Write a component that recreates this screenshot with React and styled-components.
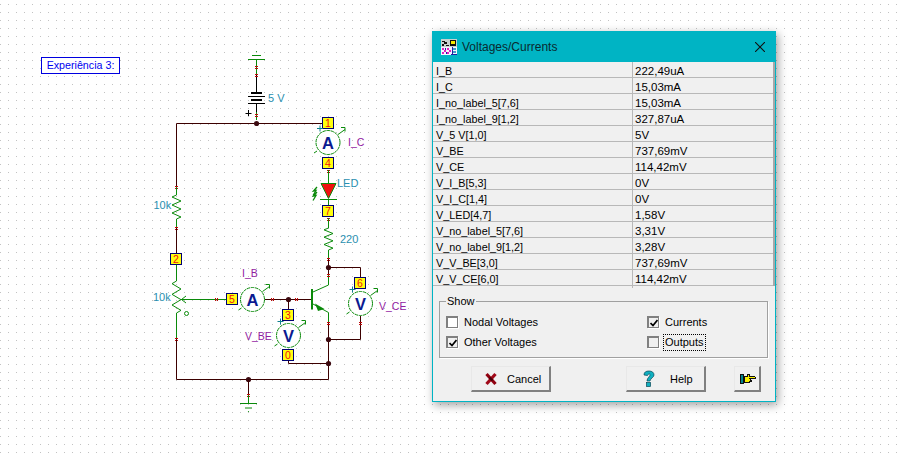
import React from 'react';
import styled, { createGlobalStyle } from 'styled-components';

const Global = createGlobalStyle`
  html, body { margin: 0; padding: 0; background: #fff; }
`;

const Desktop = styled.div`
  position: relative;
  width: 898px;
  height: 454px;
  overflow: hidden;
  display: flex;
  align-items: flex-start;
  background-color: #fff;
  background-image: conic-gradient(from 270deg at 1px 1px, #c2c2c2 90deg, transparent 0);
  background-size: 8px 8px;
  background-position: 0 4px;
`;

const NoteLabel = styled.div`
  position: absolute;
  left: 41px;
  top: 57px;
  width: 77px;
  height: 15px;
  border: 1px solid #0000e0;
  background: #fff;
  color: #0000f0;
  font: 10.7px/15px "Liberation Sans", Arial, sans-serif;
  text-align: center;
`;

const Schematic = styled.svg`
  display: block;
  flex: none;
  width: 432px;
  height: 454px;
  font-family: "Liberation Sans", Arial, sans-serif;
`;

const Dialog = styled.section`
  flex: none;
  width: 344px;
  height: 371px;
  margin-top: 31px;
  box-sizing: border-box;
  border: 1px solid #00b4c4;
  border-width: 0 1px 1px 1px;
  background: #f0f0f0;
  box-shadow: 2px 3px 9px rgba(0, 0, 0, 0.38);
  display: flex;
  flex-direction: column;
  font: 11px "Liberation Sans", Arial, sans-serif;
  color: #000;
`;

const TitleBar = styled.header`
  height: 31px;
  flex: none;
  background: #00b4c4;
  display: flex;
  align-items: center;
  gap: 5px;
  padding: 0 10px 0 8px;
`;

const DialogTitle = styled.h1`
  flex: 1;
  margin: 0;
  font: 400 12px "Liberation Sans", Arial, sans-serif;
  color: #0a2a30;
`;

const Results = styled.div`
  flex: none;
  border-right: 2px solid #a8a8a8;
  display: flex;
  flex-direction: column;
`;

const Row = styled.div`
  height: 16px;
  box-sizing: border-box;
  display: grid;
  grid-template-columns: 199px 1fr;
  border-bottom: 1px solid #b8b8b8;
  line-height: 18px;
`;

const NameCell = styled.div`
  padding-left: 3px;
  white-space: nowrap;
  font-size: 10.8px;
`;

const ValueCell = styled.div`
  padding-left: 2px;
  border-left: 1px solid #b8b8b8;
  white-space: nowrap;
  font-size: 11.5px;
`;

const ShowGroup = styled.fieldset`
  flex: none;
  margin: 10px 7px 0 6px;
  padding: 8px 0 0 6px;
  height: 62px;
  box-sizing: border-box;
  border: 1px solid #a0a0a0;
  box-shadow: 1px 1px 0 #fff;
  display: grid;
  grid-template-columns: 201px 1fr;
  grid-auto-rows: 20px;
  align-content: start;
`;

const GroupLegend = styled.legend`
  padding: 0 1px;
  margin-left: 0;
  line-height: 11px;
  height: 11px;
`;

const Option = styled.label`
  display: flex;
  align-items: center;
  gap: 6px;
  height: 14px;
`;

const OptionText = styled.span`
  outline: ${p => (p.$focused ? '1px dotted #000' : 'none')};
  outline-offset: 1px;
  line-height: 13px;
`;

const CheckBox = styled.span`
  width: 12px;
  height: 12px;
  box-sizing: border-box;
  flex: none;
  background: ${p => (p.$shaded ? '#f0f0f0' : '#fff')};
  border: 1px solid #808080;
  border-width: 2px 1px 1px 2px;
  box-shadow: 1px 1px 0 #fff;
  display: flex;
  align-items: center;
  justify-content: center;
`;

const Actions = styled.div`
  flex: none;
  margin-top: 8px;
  padding-left: 38px;
  display: flex;
`;

const ActionButton = styled.button`
  width: ${p => p.$width}px;
  height: 26px;
  margin-left: ${p => p.$gap || 0}px;
  box-sizing: border-box;
  padding: 0 0 0 ${p => p.$inset}px;
  background: #f0f0f0;
  border: 1px solid;
  border-color: #e8e8e8 #808080 #808080 #e8e8e8;
  border-width: 1px 2px 2px 1px;
  font: 11px "Liberation Sans", Arial, sans-serif;
  color: #000;
  display: flex;
  align-items: center;
  gap: ${p => p.$iconGap || 0}px;
`;

const WIRE = '#3c0000';
const GREEN = '#0a8a0a';
const TEAL = '#2a8fb0';
const PURPLE = '#9020a0';

const zig = (x, y0, y1, n = 6, a = 4.5) => {
  const step = (y1 - y0) / n;
  let d = `M${x} ${y0}`;
  for (let i = 0; i < n; i++) {
    d += ` L${x + (i % 2 ? a : -a)} ${y0 + step * (i + 0.5)}`;
  }
  return d + ` L${x} ${y1}`;
};

const Wire = ({ d, color = WIRE, w = 1 }) => <path d={d} fill="none" stroke={color} strokeWidth={w} />;
const Junction = ({ x, y }) => <circle cx={x} cy={y} r="2.6" fill="#3c0a10" />;
const TickV = ({ x, y }) => {
  const left = Math.floor(x) - 1;
  const top = Math.floor(y) - 1;
  return (
    <path d={`M${left} ${top + 0.5}h3M${left} ${top + 2.5}h3`} stroke="#c00808" strokeWidth="1" shapeRendering="crispEdges" />
  );
};
const TickH = ({ x, y }) => {
  const left = Math.floor(x) - 1;
  const top = Math.floor(y) - 1;
  return (
    <path d={`M${left + 0.5} ${top}v3M${left + 2.5} ${top}v3`} stroke="#c00808" strokeWidth="1" shapeRendering="crispEdges" />
  );
};

const Node = ({ x, y, n }) => (
  <g>
    <rect x={x - 5.5} y={y - 5.5} width="11" height="11" fill="#ffff10" stroke="#000070" strokeWidth="1" />
    <text x={x} y={y + 4} textAnchor="middle" fontSize="10.5" fill="#f01010">{n}</text>
  </g>
);

const Meter = ({ x, y, t, plus }) => (
  <g>
    <circle cx={x} cy={y} r="12" fill="#fff" stroke={GREEN} strokeWidth="1" strokeDasharray="3.5 .7" />
    <path d={`M${x - 14} ${y + 10.5}l3 -2M${x + 10} ${y - 8}l7 -5`} stroke={GREEN} strokeWidth="1" fill="none" />
    <path d={`M${x + 13} ${y - 15}h4v4`} stroke={GREEN} strokeWidth="1" fill="none" />
    {plus && <path d={`M${x - 8} ${y - 17}v6M${x - 11} ${y - 14}h6`} stroke="#108090" strokeWidth="1" />}
    <text x={x} y={y + 6} textAnchor="middle" fontSize="16.5" fontWeight="700" fill="#0a1a90">{t}</text>
  </g>
);

const Label = ({ x, y, c = TEAL, size = 11, children }) => (
  <text x={x} y={y} fontSize={size} fill={c}>{children}</text>
);

const Circuit = () => (
  <Schematic viewBox="0 0 432 454" role="img" aria-label="Circuit">
    {/* top ground and battery */}
    <circle cx="256.500" cy="51.500" r=".6" fill={GREEN} />
    <Wire d="M252 55.500h9M248 59.500h17M256.500 59.500V68" color={GREEN} />
    <Wire d="M256.500 75V92M256.500 103V112" color="#000" />
    <Wire d="M256.500 68V75M256.500 112V120" color={GREEN} />
    <path d="M251 93h11M251 100h11" stroke="#000" strokeWidth="2" />
    <path d="M248 96.500h17M248 103.500h17" stroke="#000" strokeWidth="1" />
    <TickV x={256} y={67} /><TickV x={256} y={75} /><TickV x={256} y={115} />
    <path d="M248.500 110v6M245.500 113.500h6" stroke="#000" strokeWidth="1" />
    <Label x={268} y={102}>5 V</Label>

    {/* main wires */}
    <Wire d="M176.500 123.500H322M176.500 123.500V187" />
    <Junction x={256.5} y={123.5} />
    <TickV x={176} y={187} />
    <Wire d="M176.500 187V195" color={GREEN} />
    <Wire d={zig(176.5, 195, 219)} color={GREEN} />
    <Wire d="M176.500 219V228" color={GREEN} />
    <TickV x={176} y={228} />
    <Label x={153.5} y={209}>10k</Label>

    <Wire d="M176.500 228V254" />
    <Node x={176} y={259} n="2" />
    <Wire d="M176.500 265V281" color={GREEN} />
    <Wire d={zig(176.5, 281, 313)} color={GREEN} />
    <Wire d="M176.500 313V339" color={GREEN} />
    <TickV x={176} y={339} />
    <Label x={153} y={301}>10k</Label>
    <circle cx="186.500" cy="313.500" r="2" fill="none" stroke={GREEN} strokeWidth="1" />
    <Wire d="M226 299.500H181M186 296l-4.500 3.500l4.500 3.500" color={GREEN} />
    <TickH x={216} y={299} />
    <Wire d="M176.500 339V379.500H328.500V363" />
    <Junction x={248.5} y={379.5} />
    <Wire d="M248.500 379.500V395" />
    <TickV x={248} y={395} />
    <Wire d="M248.500 395V403.500M240 403.500h17M245 408h7" color={GREEN} />
    <circle cx="248.500" cy="411.500" r=".6" fill={GREEN} />

    {/* base side */}
    <Node x={232} y={299} n="5" />
    <Meter x={252.5} y={299.5} t="A" />
    <Wire d="M265 299.500H312" />
    <TickH x={272} y={299} /><TickH x={296} y={299} />
    <Junction x={288.5} y={299.5} />
    <Wire d="M288.500 299.500V310" />
    <Node x={288} y={315} n="3" />
    <Meter x={288.5} y={335.5} t="V" plus />
    <Node x={288} y={355} n="0" />
    <Wire d="M288.500 361V363.500H328.500" />
    <Junction x={328.5} y={363.5} />
    <Label x={242} y={277} c={PURPLE} size={10.5}>I_B</Label>
    <Label x={245} y={340} c={PURPLE} size={10.5}>V_BE</Label>

    {/* collector chain */}
    <Node x={328} y={123} n="1" />
    <Meter x={328} y={142.5} t="A" plus />
    <Node x={328} y={163} n="4" />
    <TickV x={328} y={171} />
    <Wire d="M328.500 170V183" color={GREEN} />
    <path d="M321 183.500H336L328.500 198.500Z" fill="#f01010" stroke={GREEN} strokeWidth="1" />
    <Wire d="M320 199.500H337M328.500 199.500V205" color={GREEN} />
    <path d="M317 187l-3.500 4l2.500 -.5l-3 5M317 192l-3.500 4l2.500 -.5l-3 5" stroke={GREEN} strokeWidth="1.300" fill="none" />
    <Node x={328} y={211} n="7" />
    <TickV x={328} y={219} />
    <Wire d="M328.500 218V228" color={GREEN} />
    <Wire d={zig(328.5, 228, 250)} color={GREEN} />
    <Wire d="M328.500 250V259" color={GREEN} />
    <TickV x={328} y={259} />
    <Label x={348} y={146} c={PURPLE} size={10.5}>I_C</Label>
    <Label x={337} y={187}>LED</Label>
    <Label x={340} y={243}>220</Label>

    {/* transistor */}
    <Wire d="M328.500 259V275" />
    <Wire d="M328.500 275V285L313 292M313 304L328.500 312.500V323" color={GREEN} />
    <TickV x={328} y={275} />
    <Junction x={328.5} y={267.5} />
    <path d="M312 289V309.500" stroke={GREEN} strokeWidth="2" />
    <path d="M315 303.500L324.500 309L318 311Z" fill={GREEN} />
    <Wire d="M328.500 323V363.500" />
    <TickV x={328} y={323} />
    <Junction x={328.5} y={339.5} />

    {/* V_CE */}
    <Wire d="M328.500 267.500H360.500V278M360.500 316V339.500H328.500" />
    <Node x={360} y={283} n="6" />
    <Meter x={360.5} y={303.5} t="V" plus />
    <TickV x={360} y={323} />
    <Label x={379} y={310} c={PURPLE} size={10.5}>V_CE</Label>
  </Schematic>
);

const TitleIcon = () => (
  <svg width="16" height="16" viewBox="0 0 16 16" shapeRendering="crispEdges">
    <rect width="16" height="16" fill="#c8d0d0" />
    <path d="M1 2h3v1h-3zM3 3h3v2h-3zM1 5h2v2h-2zM5 6h3v1h-3z" fill="#101010" />
    <rect x="9" y="1" width="6" height="6" fill="#101010" />
    <rect x="10" y="2" width="4" height="3" fill="#f8e800" />
    <rect y="8" width="16" height="8" fill="#f4f4ff" />
    <path d="M1 9h2v2h-2zM3 11h2v2h-2zM1 13h2v2h-2zM6 9h2v2h-2zM8 11h2v2h-2zM6 13h2v2h-2z" fill="#e020c0" />
    <path d="M4 9h1v2h-1zM5 13h1v2h-1zM11 8h1v8h-1zM10 15h6v1h-6z" fill="#2020a0" />
    <path d="M12 9h3v2h-3zM12 12h3v2h-3z" fill="#40a0c8" />
  </svg>
);

const CloseIcon = () => (
  <svg width="10" height="10" viewBox="0 0 10 10">
    <path d="M0 0L10 10M10 0L0 10" stroke="#101010" strokeWidth="1.100" />
  </svg>
);

const CheckMark = () => (
  <svg width="8" height="8" viewBox="0 0 8 8">
    <path d="M.5 4L3 6.500L7.500 1" fill="none" stroke="#000" strokeWidth="1.700" />
  </svg>
);

const CancelIcon = () => (
  <svg width="14" height="14" viewBox="0 0 14 14">
    <path d="M2.500 12L11.500 2" stroke="#a00818" strokeWidth="3.200" />
    <path d="M2.500 2L11.500 12" stroke="#900010" strokeWidth="3.200" />
    <path d="M5.500 5.500L8.500 8.500" stroke="#400008" strokeWidth="2" />
  </svg>
);

const HelpIcon = () => (
  <svg width="12" height="17" viewBox="0 0 12 17">
    <path d="M1 5C1 2 3 1 6 1C9 1 11 2.500 11 5C11 7.500 7.500 8 7 11H4C4 7.500 7.500 6.500 7 4.500C6.500 3.500 5 4 4.500 5.500Z" fill="#10b0c0" stroke="#084858" strokeWidth=".7" />
    <rect x="3.500" y="12.500" width="4" height="4" fill="#10b0c0" stroke="#084858" strokeWidth=".7" />
  </svg>
);

const HandIcon = () => (
  <svg width="16" height="11" viewBox="0 0 16 11" shapeRendering="crispEdges">
    <rect x="0" y="1" width="4" height="10" fill="#101010" />
    <rect x="1" y="2" width="2" height="8" fill="#008890" />
    <path d="M4 3h3v-2h3v2h5v1h1v2h-5v1h1v2h-2v1h-6z" fill="#101010" />
    <path d="M5 4h3v-2h1v2h6v1h-6v1h1v2h-1v1h-4z" fill="#f8f000" />
  </svg>
);

const rows = [
  ['I_B', '222,49uA'], ['I_C', '15,03mA'], ['I_no_label_5[7,6]', '15,03mA'],
  ['I_no_label_9[1,2]', '327,87uA'], ['V_5 V[1,0]', '5V'], ['V_BE', '737,69mV'],
  ['V_CE', '114,42mV'], ['V_I_B[5,3]', '0V'], ['V_I_C[1,4]', '0V'],
  ['V_LED[4,7]', '1,58V'], ['V_no_label_5[7,6]', '3,31V'], ['V_no_label_9[1,2]', '3,28V'],
  ['V_V_BE[3,0]', '737,69mV'], ['V_V_CE[6,0]', '114,42mV'],
];

export default function App() {
  return (
    <Desktop>
      <Global />
      <NoteLabel>Experiência 3:</NoteLabel>
      <Circuit />
      <Dialog>
        <TitleBar>
          <TitleIcon />
          <DialogTitle>Voltages/Currents</DialogTitle>
          <CloseIcon />
        </TitleBar>
        <Results>
          {rows.map(([n, v]) => (
            <Row key={n}><NameCell>{n}</NameCell><ValueCell>{v}</ValueCell></Row>
          ))}
        </Results>
        <ShowGroup>
          <GroupLegend>Show</GroupLegend>
          <Option><CheckBox /><OptionText>Nodal Voltages</OptionText></Option>
          <Option><CheckBox $shaded><CheckMark /></CheckBox><OptionText>Currents</OptionText></Option>
          <Option><CheckBox $shaded><CheckMark /></CheckBox><OptionText>Other Voltages</OptionText></Option>
          <Option><CheckBox $shaded /><OptionText $focused>Outputs</OptionText></Option>
        </ShowGroup>
        <Actions>
          <ActionButton $width={80} $inset={12} $iconGap={9}><CancelIcon />Cancel</ActionButton>
          <ActionButton $width={80} $gap={75} $inset={16} $iconGap={15}><HelpIcon />Help</ActionButton>
          <ActionButton $width={27} $gap={28} $inset={5}><HandIcon /></ActionButton>
        </Actions>
      </Dialog>
    </Desktop>
  );
}
